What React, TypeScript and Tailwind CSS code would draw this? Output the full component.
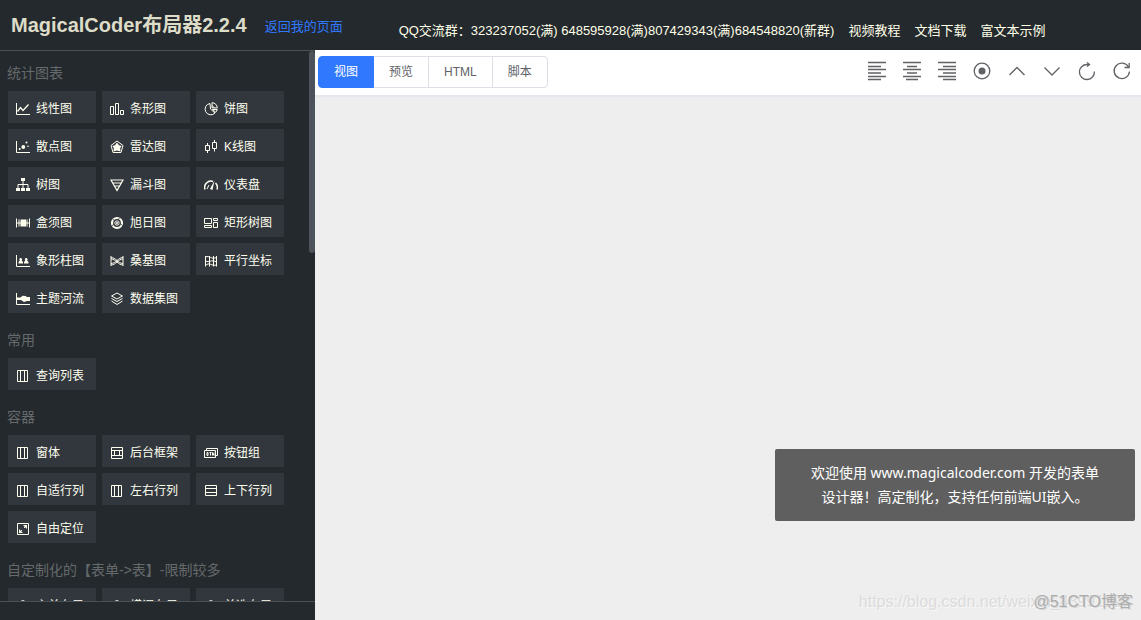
import { useState } from "react";
import type { ReactNode } from "react";

const ICONS: Record<string, ReactNode> = {
  line: (
    <>
      <path d="M.5 1v11.500H14" />
      <path d="M1.500 9.500 4.500 5.500 7 8.500 12.500 2.500" strokeWidth="1.300" />
    </>
  ),
  bar: <path d="M.5 4.500h3v8h-3zM5.500 1.500h3v11h-3zM10.500 8.500h3v4h-3z" />,
  pie: (
    <>
      <path d="M6 1.500a5.700 5.700 0 1 0 5 9.500L6.500 7z" />
      <path d="M8 .7v5.200h5.300A5.300 5.300 0 0 0 8 .7zM8.500 7.500h4.800l-1.500 2.800zM8 3.500l2.500 2.400" />
    </>
  ),
  scatter: (
    <>
      <path d="M.5 1v11.500H14" />
      <g fill="currentColor" stroke="none">
        <circle cx="7.300" cy="7" r="1.900" />
        <circle cx="3.700" cy="9" r="1" />
        <circle cx="10.500" cy="2.500" r="1" />
        <circle cx="12" cy="6.300" r=".8" />
      </g>
    </>
  ),
  radar: (
    <>
      <path d="M7 1 13 5.500 11 12.500H3L1 5.500z" />
      <path d="M7 2.500l2 2.700 2.700.8-1.500 2 .3 3.500L7 10.500l-3.500 1 .3-3.500L2.300 6 5 5.200z" fill="currentColor" stroke="none" />
    </>
  ),
  candle: <path d="M1.500 5.500h4v5h-4zM3.500 3v2.500M3.500 10.500v2.500M8.500 2.500h4v6h-4zM10.500 0v2.500M10.500 8.500v3" />,
  tree: (
    <>
      <path d="M7 3v3.500M2 10V6.500h10V10M7 6.500V10" />
      <path d="M5 0h4v3H5zM0 10h4v3H0zM5 10h4v3H5zM10 10h4v3h-4z" fill="currentColor" stroke="none" />
    </>
  ),
  funnel: <path d="M1 2h12L7 12.500zM3 5h8M4.500 8h5" strokeWidth="1.200" />,
  gauge: (
    <>
      <path d="M1 11.500A6.300 6.300 0 0 1 9 3.500M11.500 5A6.300 6.300 0 0 1 13 11.500" strokeWidth="1.500" />
      <path d="M3 11 5 7" />
      <path d="M10.500 2.500 8.500 12 6 11z" fill="currentColor" stroke="none" />
    </>
  ),
  boxplot: (
    <>
      <path d="M.5 2.500v9M13.500 2.500v9M0 7h14M3 3.500v7M11 3.500v7" />
      <path d="M4.500 3.500h5.500v7H4.500z" fill="currentColor" stroke="none" />
    </>
  ),
  sunburst: (
    <>
      <circle cx="7" cy="7" r="5" strokeWidth="2.200" />
      <circle cx="7" cy="7" r="2.200" />
      <path d="M7 4.500 9.500 2M9.500 7l3 2.500M4.500 8l-3 2M5 5 2.500 3" stroke="#32373d" strokeWidth=".8" />
      <circle cx="7" cy="7" r="1" fill="currentColor" stroke="none" />
    </>
  ),
  treemap: <path d="M.5 2.500h7v5h-7zM9.500 2.500h4v2h-4zM9.500 6.500h4v5h-4zM.5 9.500h7v2h-7z" />,
  pictorial: (
    <>
      <path d="M.5 1v11.500H14" />
      <path
        d="M4.700 4a1.500 1.500 0 0 1 .9 2.600L7 8v1.500H2.500V8l1.300-1.400A1.500 1.500 0 0 1 4.700 4zM10.200 4a1.500 1.500 0 0 1 .9 2.600L12.500 8v1.500H8V8l1.300-1.400A1.500 1.500 0 0 1 10.200 4z"
        fill="currentColor"
        stroke="none"
      />
    </>
  ),
  sankey: (
    <>
      <path d="M1 2v10M13 2v10" />
      <path d="M1 3.500c5 0 7 6 12 6M1 5c5 0 7 6 12 6M1 9.500c5 0 7-6 12-6M1 11c5 0 7-6 12-6" />
    </>
  ),
  parallel: (
    <path d="M1.500 2v10.500M5.500 2v10.500M9.500 2v10.500M12.500 2v10.500M1.500 3c4-2 6 3 11 .5M1.500 7c4 2 6-2 11 1M1.500 11.500c4-4 6 1 11-.5" />
  ),
  river: (
    <>
      <path d="M.5 1v11.500H14" />
      <path d="M1 5.500h3.500l2-1.700 3 .2L11 5h3v4h-3L8 10 5 8H1z" fill="currentColor" stroke="none" />
    </>
  ),
  dataset: <path d="M7 1 12.500 4 7 7 1.500 4zM1.500 6.500 7 9.500l5.500-3M1.500 9 7 12.500 12.500 9" />,
  columns: <path d="M1.500 1.500h10v11h-10zM4.500 1.500v11M8.500 1.500v11" />,
  rows: <path d="M1.500 1.500h11v10h-11zM1.500 4.500h11M1.500 8.500h11" />,
  frame: <path d="M1.500 1.500h11v11h-11zM1.500 4.500h11M1.500 9.500h11M4.500 4.500v5M9.500 4.500v5" />,
  buttons: (
    <path d="M.5 4.500h11v7H.5zM2.500 4V2.500h11v7H12M3 6.500v3M3 6.500h1v3H3M5.500 6.500h2M6.500 6.500v3M8.500 9.500v-3l1.500 3v-3" />
  ),
  free: (
    <>
      <path d="M1.500 1.500h11v11h-11zM8 6l3-3M6 8l-3 3" />
      <path d="M7 3h4v4zM7 11H3V7z" fill="currentColor" stroke="none" />
    </>
  ),
  form: <path d="M0 3.500h4.500C5 1 9 1 9.500 3.500H14M1.500 3.500v9h11v-9" />,
};

type Widget = { label: string; icon: string };

const GROUPS: { title: string; items: Widget[] }[] = [
  {
    title: "统计图表",
    items: [
      { label: "线性图", icon: "line" },
      { label: "条形图", icon: "bar" },
      { label: "饼图", icon: "pie" },
      { label: "散点图", icon: "scatter" },
      { label: "雷达图", icon: "radar" },
      { label: "K线图", icon: "candle" },
      { label: "树图", icon: "tree" },
      { label: "漏斗图", icon: "funnel" },
      { label: "仪表盘", icon: "gauge" },
      { label: "盒须图", icon: "boxplot" },
      { label: "旭日图", icon: "sunburst" },
      { label: "矩形树图", icon: "treemap" },
      { label: "象形柱图", icon: "pictorial" },
      { label: "桑基图", icon: "sankey" },
      { label: "平行坐标", icon: "parallel" },
      { label: "主题河流", icon: "river" },
      { label: "数据集图", icon: "dataset" },
    ],
  },
  { title: "常用", items: [{ label: "查询列表", icon: "columns" }] },
  {
    title: "容器",
    items: [
      { label: "窗体", icon: "columns" },
      { label: "后台框架", icon: "frame" },
      { label: "按钮组", icon: "buttons" },
      { label: "自适行列", icon: "columns" },
      { label: "左右行列", icon: "columns" },
      { label: "上下行列", icon: "rows" },
      { label: "自由定位", icon: "free" },
    ],
  },
  {
    title: "自定制化的【表单->表】-限制较多",
    items: [
      { label: "主单布局", icon: "form" },
      { label: "横调布局", icon: "form" },
      { label: "单选布局", icon: "form" },
    ],
  },
];

const TABS = ["视图", "预览", "HTML", "脚本"];

const TOOLS: { label: string; icon: ReactNode }[] = [
  { label: "左对齐", icon: <path d="M1 1.500h18M1 5.500h13M1 8.500h18M1 12h13M1 15.500h18M1 18.500h13" /> },
  { label: "居中", icon: <path d="M1 1.500h18M5 5.500h10M1 8.500h18M5 12h10M1 15.500h18M4 18.500h12" /> },
  { label: "右对齐", icon: <path d="M1 1.500h18M6 5.500h13M1 8.500h18M6 12h13M1 15.500h18M6 18.500h13" /> },
  {
    label: "选中",
    icon: (
      <>
        <circle cx="10" cy="10" r="7.800" />
        <circle cx="10" cy="10" r="3.500" fill="currentColor" stroke="none" />
      </>
    ),
  },
  { label: "上移", icon: <path d="M2.500 14 10 6.500 17.500 14" /> },
  { label: "下移", icon: <path d="M2.500 6.500 10 14l7.500-7.500" /> },
  {
    label: "撤销",
    icon: (
      <>
        <path d="M17.400 10.500A7.500 7.500 0 1 1 10 3.500h2" />
        <path d="m10 1.500 2.500 2L10 5.500" />
      </>
    ),
  },
  {
    label: "重做",
    icon: (
      <>
        <path d="M17.500 10.500A7.700 7.700 0 1 1 16.500 6" />
        <path d="M17.200 2v4.500h-4.700" />
      </>
    ),
  },
];

function WidgetTile({ label, icon }: Widget) {
  return (
    <button
      type="button"
      className="flex h-8 items-center gap-1.5 bg-[#32373d] pt-1 pl-2 text-xs whitespace-nowrap text-[#fffff0]"
    >
      <svg viewBox="0 0 14 14" className="size-3.5 shrink-0" fill="none" stroke="currentColor" aria-hidden="true">
        {ICONS[icon]}
      </svg>
      {label}
    </button>
  );
}

function Header() {
  return (
    <header className="flex h-[50px] shrink-0 items-center bg-[#24292d] text-[13px] whitespace-nowrap text-[#ffffe8]">
      <h1 className="pl-[11px] text-xl font-bold text-[#dcdcc8]">MagicalCoder布局器2.2.4</h1>
      <a href="#home" className="ml-[18px] pt-1 text-[#3079ff]">
        返回我的页面
      </a>
      <nav className="ml-14 flex gap-3.5 pt-3">
        <span>QQ交流群：323237052(满) 648595928(满)807429343(满)684548820(新群)</span>
        <a href="#video">视频教程</a>
        <a href="#docs">文档下载</a>
        <a href="#editor">富文本示例</a>
      </nav>
    </header>
  );
}

function Sidebar() {
  return (
    <aside className="flex w-[315px] shrink-0 flex-col bg-[#24292d]">
      <div className="relative min-h-0 flex-1 overflow-hidden border-y border-[#4b5053] pt-2.5">
        {GROUPS.map((group) => (
          <section key={group.title} className="mb-[15px] px-2">
            <h2 className="-ml-px pb-1.5 text-sm leading-6 text-[#65696c]">{group.title}</h2>
            <div className="grid grid-cols-[repeat(3,88px)] gap-1.5">
              {group.items.map((item) => (
                <WidgetTile key={item.label} {...item} />
              ))}
            </div>
          </section>
        ))}
        {/* scrollbar thumb */}
        <div className="absolute top-0 right-0 h-[202px] w-1.5 rounded-full bg-[#4c535a]" />
      </div>
      <div className="h-[18px] shrink-0" />
    </aside>
  );
}

function Toolbar() {
  const [active, setActive] = useState("视图");

  return (
    <div className="flex shrink-0 items-start justify-between border-b-2 border-[#e4e7ed] bg-white pt-1.5 pr-[9px] pb-[7px] pl-1">
      <div className="flex">
        {TABS.map((tab) => (
          <button
            key={tab}
            type="button"
            onClick={() => setActive(tab)}
            className={`-ml-px h-8 border px-[15px] text-xs first:rounded-l last:rounded-r ${
              tab === active
                ? "relative border-[#3079ff] bg-[#3079ff] text-white"
                : "border-[#dcdfe6] bg-white text-[#606266]"
            }`}
          >
            {tab}
          </button>
        ))}
      </div>
      <div className="flex gap-[15px] pt-[5px] text-[#606266]">
        {TOOLS.map((tool) => (
          <button key={tool.label} type="button" aria-label={tool.label}>
            <svg viewBox="0 0 20 20" className="size-5" fill="none" stroke="currentColor" strokeWidth="1.300">
              {tool.icon}
            </svg>
          </button>
        ))}
      </div>
    </div>
  );
}

export default function App() {
  return (
    <div
      lang="zh-CN"
      className="flex h-screen flex-col overflow-hidden font-['Liberation_Sans','Noto_Sans_CJK_SC',sans-serif]"
    >
      <Header />
      <div className="flex min-h-0 flex-1">
        <Sidebar />
        <main className="relative flex min-w-0 flex-1 flex-col bg-[#eeeeee]">
          <Toolbar />
          <div
            role="status"
            className="absolute right-1.5 bottom-[99px] w-[360px] rounded-xs bg-[#5f5f5f] px-[30px] py-3 text-center font-['Noto_Sans','Noto_Sans_CJK_SC',sans-serif] text-sm leading-6 text-white"
          >
            欢迎使用 www.magicalcoder.com 开发的表单设计器！高定制化，支持任何前端UI嵌入。
          </div>
          {/* watermarks */}
          <div className="absolute right-2.5 bottom-2 text-base leading-5 text-[#dcdcdc] [text-shadow:1px_1px_0_#f8f8f8]">
            https://blog.csdn.net/weixin_43991327
          </div>
          <div className="absolute right-2 bottom-2 text-base leading-5 text-[#adadad] [text-shadow:1px_1px_0_#d8d8d8]">
            @51CTO博客
          </div>
        </main>
      </div>
    </div>
  );
}
